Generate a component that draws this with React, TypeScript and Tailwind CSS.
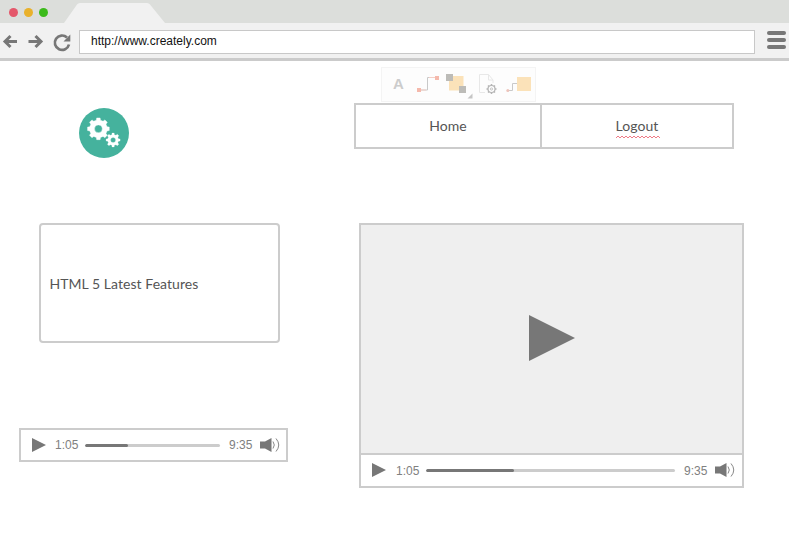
import React from "react";

function gearPath(cx: number, cy: number, outer: number, inner: number, hole: number, teeth: number, turn = 0) {
  const step = (Math.PI * 2) / teeth;
  const pts: string[] = [];
  for (let i = 0; i < teeth; i++) {
    const a = i * step + turn;
    const corners: [number, number][] = [
      [inner, -0.3],
      [outer, -0.2],
      [outer, 0.2],
      [inner, 0.3],
    ];
    for (const [r, o] of corners) {
      pts.push(`${(cx + r * Math.cos(a + o * step)).toFixed(2)} ${(cy + r * Math.sin(a + o * step)).toFixed(2)}`);
    }
  }
  return `M${pts.join("L")}ZM${cx - hole} ${cy}a${hole} ${hole} 0 1 0 ${hole * 2} 0a${hole} ${hole} 0 1 0 ${-hole * 2} 0Z`;
}

function BrowserChrome() {
  return (
    <header className="border-b-[3px] border-[#cbcbcb] bg-[#f1f1f1]">
      <div className="flex h-[23px] bg-[#dcdedb]">
        <div className="flex w-16 items-center gap-[6px] pt-[2px] pl-[9px]">
          <span className="size-[9px] rounded-full bg-[#e4586b]" />
          <span className="size-[9px] rounded-full bg-[#e9b12b]" />
          <span className="size-[9px] rounded-full bg-[#3cba1b]" />
        </div>
        <svg width="102" height="23" viewBox="0 0 102 23">
          <path d="M0 23 13 4.500Q14 3 16 3H83Q85 3 86 4.500L101 23Z" fill="#f1f1f1" />
        </svg>
      </div>
      <div className="flex h-[35px] items-start">
        <svg width="79" height="35" viewBox="0 0 79 35" fill="none" stroke="#777" strokeWidth="3">
          <path d="M17 18.500H6M10.500 13 5 18.500l5.500 5.500" />
          <path d="M28.500 18.500H40M35.500 13l5.500 5.500-5.500 5.500" />
          <path d="M67 14.500A7.200 7.200 0 1 0 69 21.500" strokeWidth="2.700" />
          <path d="M70.300 11.500V18.500H63.500Z" fill="#777" stroke="none" />
        </svg>
        <div className="mt-[7px] h-6 w-[676px] border border-[#c8c8c8] bg-white pl-[11px] font-['Liberation_Sans',Arial,sans-serif] text-[12px] leading-[21px] text-[#111]">
          http://www.creately.com
        </div>
        <div className="mt-2 ml-3 flex w-[19px] flex-col gap-[3px]">
          <span className="h-1 rounded-full bg-[#777]" />
          <span className="h-1 rounded-full bg-[#777]" />
          <span className="h-1 rounded-full bg-[#777]" />
        </div>
      </div>
    </header>
  );
}

function PlayerControls({ wide = false }: { wide?: boolean }) {
  return (
    <div className="flex h-[30px] items-center pl-[11px] font-['Liberation_Sans',Arial,sans-serif] text-[12px] leading-none text-[#808080]">
      <svg width="14" height="14" viewBox="0 0 14 14">
        <path d="M0 0 14 7 0 14Z" fill="#777" />
      </svg>
      <span className={`w-[25px] ${wide ? "ml-[10px] pt-px" : "ml-[9px]"}`}>1:05</span>
      <div className={`ml-[5px] flex h-[3px] overflow-hidden rounded-full bg-[#ccc] ${wide ? "w-[249px]" : "w-[135px]"}`}>
        <div className={`rounded-full bg-[#777] ${wide ? "w-[88px]" : "w-[43px]"}`} />
      </div>
      <span className={`ml-[9px] w-[25px] ${wide ? "pt-px" : ""}`}>9:35</span>
      <svg className="ml-[6px]" width="21" height="16" viewBox="0 0 21 16">
        <path d="M0 4.500H5L11.500 1V15L5 11.500H0Z" fill="#777" />
        <path d="M13 4.500Q15.600 8 13 11.500M16 1.500Q21.500 8 16 14.500" fill="none" stroke="#888" strokeWidth="1" />
      </svg>
    </div>
  );
}

function ShapeToolbar() {
  return (
    <div className="ml-[27px] flex h-[35px] w-[155px] border border-[#f4f4f4] bg-[#fdfdfd]">
      <span className="w-[33px] pl-[11px] font-['Liberation_Sans',Arial,sans-serif] text-[15px] leading-[32px] font-bold text-[#cccccc]">
        A
      </span>
      <svg width="120" height="33" viewBox="415 68 120 33">
        <path d="M421 90H427.500V77.500H435" fill="none" stroke="#c9c9c9" />
        <path d="M421 90H426M429 77.500H435" stroke="#f4cfc6" />
        <path d="M417 88h4v4h-4ZM435 76h4v4h-4Z" fill="#f5b9ac" />
        <path d="M449 76h14.500v14.500H449Z" fill="#fbe2b9" />
        <path d="M446 74h7v7h-7ZM459 86h7v7h-7Z" fill="#bdbcb8" />
        <path d="M472.500 93.500V98.500H467.500Z" fill="#c5c5c5" />
        <path d="M493 83V80L488.500 74.500H479.500V92.500H485M488.500 74.500V80H493" fill="none" stroke="#e8e8e8" />
        <circle cx="491.500" cy="89" r="3.500" fill="#fdfdfd" stroke="#b5b5b5" strokeWidth="1.200" />
        <circle cx="491.500" cy="89" r="1.100" fill="none" stroke="#c5c5c5" />
        <path d="M491.500 84v1.500M491.500 92.500V94M486.500 89H488M495 89h1.500M488 85.500l1 1M494 91.500l1 1M488 92.500l1-1M494 86.500l1-1" stroke="#b5b5b5" strokeWidth="1.500" />
        <path d="M509 90.500H512.500V83.500H517" fill="none" stroke="#c9c9c9" />
        <circle cx="507.800" cy="90.500" r="1.500" fill="#edc4bb" />
        <path d="M517 77h14v14h-14Z" fill="#fbe2b9" />
      </svg>
    </div>
  );
}

function LeftColumn() {
  return (
    <section className="w-[354px] pt-[47px]">
      <svg className="ml-[79px] block" width="50" height="50" viewBox="0 0 50 50">
        <circle cx="25" cy="25" r="25" fill="#45b29d" />
        <path d={gearPath(19.4, 20.8, 11, 8.9, 3.9, 8, 0)} fill="#fff" fillRule="evenodd" stroke="#fff" strokeWidth=".4" strokeLinejoin="round" />
        <path d={gearPath(34.1, 32, 7.1, 5.5, 2.5, 8, 0)} fill="#fff" fillRule="evenodd" stroke="#fff" strokeWidth=".2" strokeLinejoin="round" />
      </svg>
      <div className="mt-[65px] ml-[39px] flex h-[120px] w-[241px] items-center rounded-[4px] border-2 border-[#ccc] pl-[8.5px] text-[14px] tracking-[0.05px] text-[#555]">
        <span>HTML 5 Latest Features</span>
      </div>
      <div className="mt-[85px] ml-[19px] h-[34px] w-[269px] border-2 border-[#ccc]">
        <PlayerControls />
      </div>
    </section>
  );
}

function RightColumn() {
  return (
    <section className="pt-[6px]">
      <ShapeToolbar />
      <nav className="mt-px flex h-[46px] w-[380px] border-2 border-[#ccc] text-[14px] tracking-[0.05px] text-[#555]">
        <span className="flex w-[186px] items-center justify-center border-r-2 border-[#ccc] pb-px">Home</span>
        <span className="flex flex-1 items-center justify-center pb-px">
          <span className="relative">
            Logout
            <svg className="absolute top-[20px] left-0" width="44" height="4" viewBox="0 0 44 4">
              <path d="M0 3l2-2 2 2 2-2 2 2 2-2 2 2 2-2 2 2 2-2 2 2 2-2 2 2 2-2 2 2 2-2 2 2 2-2 2 2 2-2 2 2 2-2 2 2" fill="none" stroke="#ee7b87" />
            </svg>
          </span>
        </span>
      </nav>
      <div className="mt-[74px] ml-[5px] h-[265px] w-[385px] border-2 border-[#ccc]">
        <div className="flex h-[230px] items-center justify-center border-b-2 border-[#ccc] bg-[#efefef] pb-[2px]">
          <svg width="46" height="46" viewBox="0 0 46 46">
            <path d="M0 0 46 23 0 46Z" fill="#777" />
          </svg>
        </div>
        <PlayerControls wide />
      </div>
    </section>
  );
}

export default function App() {
  return (
    <div className="h-[560px] w-[789px] overflow-hidden bg-white font-[Lato,sans-serif]">
      <BrowserChrome />
      <main className="flex items-start">
        <LeftColumn />
        <RightColumn />
      </main>
    </div>
  );
}
